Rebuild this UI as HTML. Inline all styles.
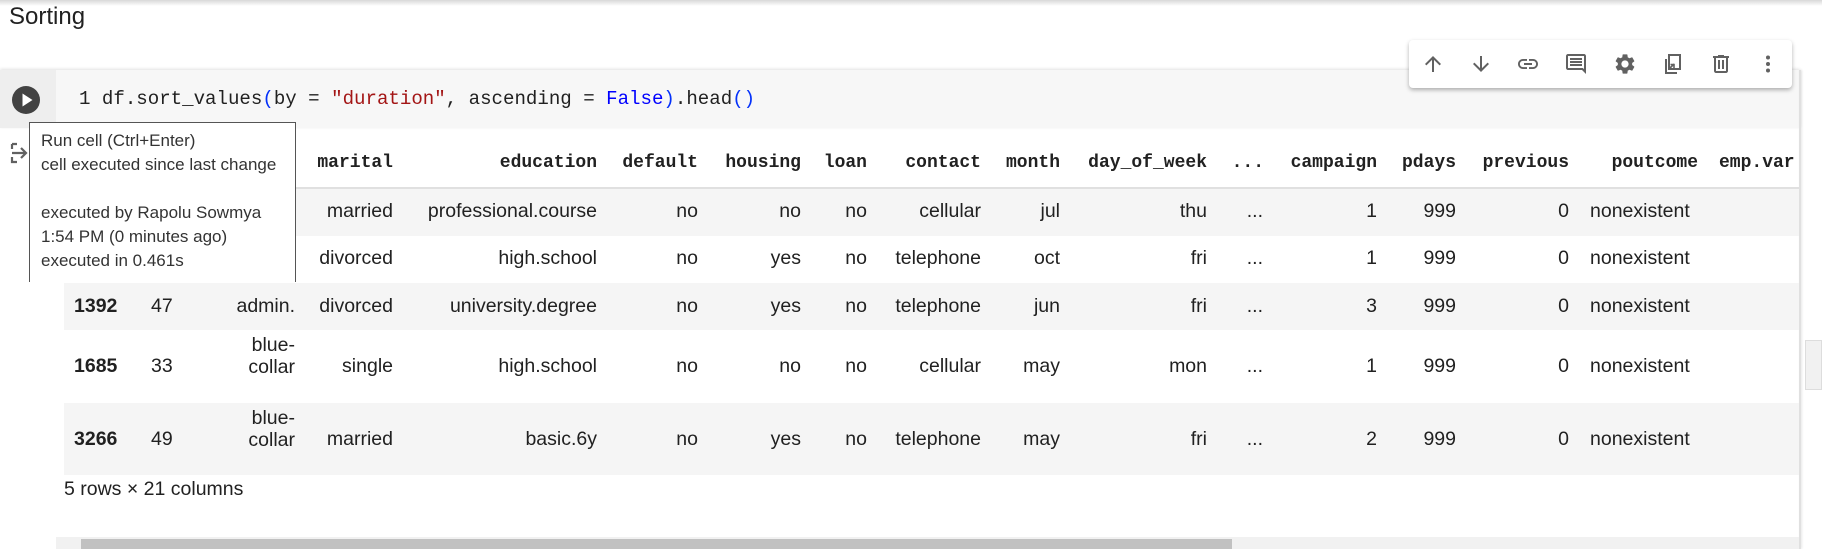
<!DOCTYPE html>
<html><head><meta charset="utf-8"><style>
*{margin:0;padding:0;box-sizing:border-box}
body{width:1822px;height:549px;overflow:hidden;background:#fff;position:relative;font-family:"Liberation Sans",sans-serif;color:#212121}
.a{position:absolute}
.mono{font-family:"Liberation Mono",monospace}
.h{position:absolute;font-family:"Liberation Mono",monospace;font-weight:bold;font-size:18px;text-align:right;white-space:nowrap;color:#212121}
.c{position:absolute;font-size:19.5px;text-align:right;white-space:nowrap;line-height:22px}
.ic{position:absolute;top:52px;width:24px;height:24px}
</style></head><body>
<div class="a" style="left:0;top:0;width:1822px;height:6px;background:linear-gradient(#d8d8d8,#fff)"></div>
<div class="a" style="left:9px;top:3px;font-size:24px;color:#212121">Sorting</div>

<!-- cell -->
<div class="a" style="left:0;top:70px;width:1800px;height:58px;background:#f7f7f7;box-shadow:0 -1px 3px rgba(0,0,0,.12)"></div>
<div class="a" style="left:0;top:70px;width:56px;height:58px;background:#eeeeee"></div>
<div class="a" style="left:1799px;top:70px;width:2px;height:479px;background:#e0e0e0;box-shadow:1px 0 2px rgba(0,0,0,.1)"></div>
<svg class="a" style="left:11px;top:85px" width="30" height="30" viewBox="0 0 30 30"><circle cx="15" cy="15" r="14" fill="#424242"/><path d="M11.5 8.5 L21.5 15 L11.5 21.5Z" fill="#fff"/></svg>
<div class="a mono" style="left:79px;top:88px;font-size:19.1px;white-space:pre;color:#212121">1 df.sort_values<span style="color:#0431fa">(</span>by = <span style="color:#a31515">"duration"</span>, ascending = <span style="color:#0000ff">False</span><span style="color:#0431fa">)</span>.head<span style="color:#0431fa">()</span></div>

<!-- output icon -->
<svg class="a" style="left:8px;top:140px" width="26" height="26" viewBox="0 0 26 26" fill="none" stroke="#616161" stroke-width="2.2"><path d="M4 4 H9 M4 4 V9 M4 17 V22 H9 M4 13 H18 M13 8 L18 13 L13 18"/></svg>

<!-- table rows bg -->
<div class="a" style="left:64px;top:187px;width:1735px;height:2px;background:#e0e0e0"></div>
<div class="a" style="left:64px;top:189px;width:1735px;height:47px;background:#f5f5f5"></div>
<div class="a" style="left:64px;top:283px;width:1735px;height:47px;background:#f5f5f5"></div>
<div class="a" style="left:64px;top:403px;width:1735px;height:72px;background:#f5f5f5"></div>

<!-- headers -->
<div class="h" style="left:0;width:393px;top:153px">marital</div>
<div class="h" style="left:0;width:597px;top:153px">education</div>
<div class="h" style="left:0;width:698px;top:153px">default</div>
<div class="h" style="left:0;width:801px;top:153px">housing</div>
<div class="h" style="left:0;width:867px;top:153px">loan</div>
<div class="h" style="left:0;width:981px;top:153px">contact</div>
<div class="h" style="left:0;width:1060px;top:153px">month</div>
<div class="h" style="left:0;width:1207px;top:153px">day_of_week</div>
<div class="h" style="left:0;width:1264px;top:153px">...</div>
<div class="h" style="left:0;width:1377px;top:153px">campaign</div>
<div class="h" style="left:0;width:1456px;top:153px">pdays</div>
<div class="h" style="left:0;width:1569px;top:153px">previous</div>
<div class="h" style="left:0;width:1698px;top:153px">poutcome</div>
<div class="h" style="left:1719px;top:153px;text-align:left;width:80px;overflow:hidden">emp.var</div>

<div id="rows"></div>
<script>
var R=[393,597,698,801,867,981,1060,1207,1263,1377,1456,1569,1698];
var rows=[
[200,null,null,null,["married","professional.course","no","no","no","cellular","jul","thu","...","1","999","0","nonexistent"]],
[247,null,null,null,["divorced","high.school","no","yes","no","telephone","oct","fri","...","1","999","0","nonexistent"]],
[295,"1392","47","admin.",["divorced","university.degree","no","yes","no","telephone","jun","fri","...","3","999","0","nonexistent"]],
[355,"1685","33","blue-<br>collar",["single","high.school","no","no","no","cellular","may","mon","...","1","999","0","nonexistent"]],
[428,"3266","49","blue-<br>collar",["married","basic.6y","no","yes","no","telephone","may","fri","...","2","999","0","nonexistent"]]];
var h="";
rows.forEach(function(r){
 var y=r[0];
 if(r[1]){h+='<div class="c" style="left:74px;top:'+y+'px;text-align:left;font-weight:bold">'+r[1]+'</div>';
 h+='<div class="c" style="left:151px;top:'+y+'px;text-align:left">'+r[2]+'</div>';
 var two=r[3].indexOf("<br>")>0;
 h+='<div class="c" style="left:0;width:295px;top:'+(two?y-21:y)+'px">'+r[3]+'</div>';}
 r[4].forEach(function(t,i){h+='<div class="c" style="left:0;width:'+R[i]+'px;top:'+y+'px'+(i==12?';left:1590px;width:auto;text-align:left':'')+'">'+t+'</div>';});
});
document.getElementById("rows").innerHTML=h;
</script>

<div class="a" style="left:64px;top:478px;font-size:19.5px;line-height:22px">5 rows × 21 columns</div>

<!-- horizontal scrollbar -->
<div class="a" style="left:56px;top:537px;width:1743px;height:12px;background:#f1f1f1"></div>
<div class="a" style="left:81px;top:539px;width:1151px;height:10px;background:#c1c1c1"></div>
<!-- vertical scrollbar -->
<div class="a" style="left:1805px;top:340px;width:17px;height:50px;background:#f1f1f1;border:1px solid #ddd"></div>

<!-- tooltip -->
<div class="a" style="left:29px;top:122px;width:267px;height:160px;background:#fff;border:1px solid #555;border-bottom:none;font-size:17px;line-height:24px;color:#333;padding:6px 0 0 11px">Run cell (Ctrl+Enter)<br>cell executed since last change<br><br>executed by Rapolu Sowmya<br>1:54 PM (0 minutes ago)<br>executed in 0.461s</div>

<!-- toolbar -->
<div class="a" style="left:1409px;top:40px;width:383px;height:48px;background:#fff;border-radius:4px;box-shadow:0 2px 4px rgba(0,0,0,.3)"></div>
<svg class="ic" style="left:1421px" viewBox="0 0 24 24"><path d="M4 12l1.41 1.41L11 7.83V20h2V7.83l5.58 5.59L20 12l-8-8-8 8z" fill="#616161"/></svg>
<svg class="ic" style="left:1469px" viewBox="0 0 24 24"><path d="M20 12l-1.41-1.41L13 16.17V4h-2v12.17l-5.58-5.59L4 12l8 8 8-8z" fill="#616161"/></svg>
<svg class="ic" style="left:1516px" viewBox="0 0 24 24"><path d="M3.9 12c0-1.710 1.39-3.1 3.1-3.1h4V7H7c-2.76 0-5 2.24-5 5s2.24 5 5 5h4v-1.9H7c-1.71 0-3.1-1.39-3.1-3.1zM8 13h8v-2H8v2zm9-6h-4v1.9h4c1.71 0 3.1 1.39 3.1 3.1s-1.39 3.1-3.1 3.1h-4V17h4c2.76 0 5-2.24 5-5s-2.24-5-5-5z" fill="#616161"/></svg>
<svg class="ic" style="left:1564px" viewBox="0 0 24 24"><path d="M21.99 4c0-1.1-.89-2-1.99-2H4c-1.1 0-2 .9-2 2v12c0 1.1.9 2 2 2h14l4 4-.01-18zM20 4v13.17L18.830 16H4V4h16zM6 12h12v2H6zm0-3h12v2H6zm0-3h12v2H6z" fill="#616161"/></svg>
<svg class="ic" style="left:1613px" viewBox="0 0 24 24"><path d="M19.14 12.94c.04-.3.06-.61.06-.94 0-.32-.02-.64-.07-.94l2.03-1.58a.49.49 0 00.12-.61l-1.92-3.32a.488.488 0 00-.59-.22l-2.39.96c-.5-.38-1.03-.7-1.62-.94l-.36-2.54a.484.484 0 00-.48-.41h-3.84c-.24 0-.43.17-.47.41l-.36 2.54c-.59.24-1.13.57-1.62.94l-2.39-.96c-.22-.08-.47 0-.59.22L2.74 8.87c-.12.21-.08.47.12.61l2.03 1.58c-.05.3-.09.63-.09.94s.02.64.07.94l-2.03 1.58a.49.49 0 00-.12.61l1.92 3.32c.12.22.37.29.59.22l2.39-.96c.5.38 1.03.7 1.62.94l.36 2.54c.05.24.24.41.48.41h3.84c.24 0 .44-.17.47-.41l.36-2.54c.59-.24 1.13-.56 1.62-.94l2.39.96c.22.08.47 0 .59-.22l1.92-3.32c.12-.22.07-.47-.12-.61l-2.01-1.58zM12 15.6c-1.98 0-3.6-1.62-3.6-3.6s1.62-3.6 3.6-3.6 3.6 1.62 3.6 3.6-1.62 3.6-3.6 3.6z" fill="#616161"/></svg>
<svg class="ic" style="left:1661px" viewBox="0 0 24 24" fill="none" stroke="#616161" stroke-width="2"><path d="M8 3h11v14H8z M5 7v14h11"/><path d="M9 16l4-4 M9.5 12.5H13V16" stroke-width="1.6"/></svg>
<svg class="ic" style="left:1709px" viewBox="0 0 24 24"><path d="M15 4V3H9v1H4v2h1v13c0 1.1.9 2 2 2h10c1.1 0 2-.9 2-2V6h1V4h-5zm2 15H7V6h10v13zM9 8h2v9H9zm4 0h2v9h-2z" fill="#616161"/></svg>
<svg class="ic" style="left:1756px" viewBox="0 0 24 24"><circle cx="12" cy="5.5" r="2" fill="#616161"/><circle cx="12" cy="12" r="2" fill="#616161"/><circle cx="12" cy="18.5" r="2" fill="#616161"/></svg>
</body></html>
